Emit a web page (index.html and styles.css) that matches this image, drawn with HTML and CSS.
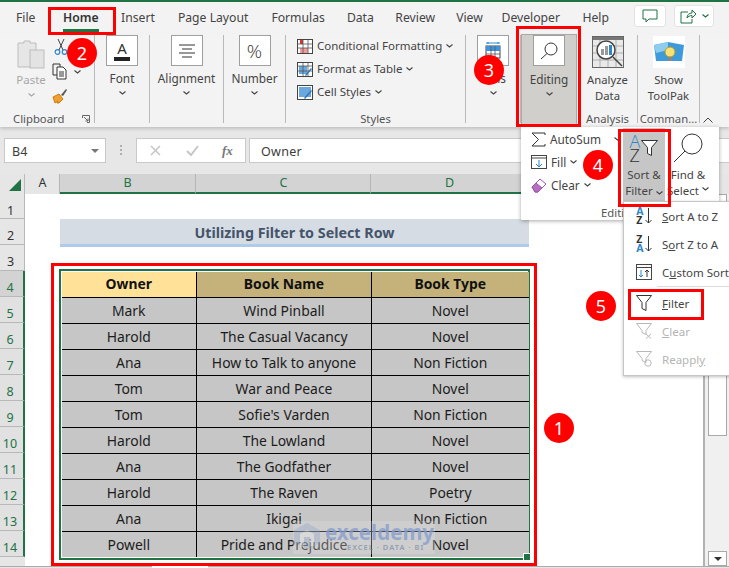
FILE: index.html
```html
<!DOCTYPE html>
<html lang="en">
<head>
<meta charset="utf-8">
<title>Utilizing Filter to Select Row</title>
<link rel="stylesheet" href="styles.css">
</head>
<body>
<div class="app">
  <nav class="tabs">
    <span class="tab t-file">File</span>
    <span class="tab t-home">Home</span>
    <span class="tab t-insert">Insert</span>
    <span class="tab t-page">Page Layout</span>
    <span class="tab t-form">Formulas</span>
    <span class="tab t-data">Data</span>
    <span class="tab t-rev">Review</span>
    <span class="tab t-view">View</span>
    <span class="tab t-dev">Developer</span>
    <span class="tab t-help">Help</span>
    <div class="tab-actions">
      <span class="act act-c"><svg width="16" height="14" viewBox="0 0 16 14"><path d="M1 1h14v9H7l-3 3v-3H1z" fill="none" stroke="#217346"/></svg></span>
      <span class="act act-s"><svg width="16" height="15" viewBox="0 0 16 15"><path d="M8 3H1v11h11v-4M7 9c0-3 2-5 5-5V1l4 4-4 4V6.500C10 6.500 8 7.500 7 9z" fill="none" stroke="#217346"/></svg><svg width="7" height="4" viewBox="0 0 7 4"><path d="M.5.500l3 2.500 3-2.500" fill="none" stroke="#217346" stroke-width="1.200"/></svg></span>
    </div>
  </nav>

  <section class="ribbon">
    <div class="group g-clip">
      <div class="clip-body">
        <div class="paste">
          <svg width="28" height="30" viewBox="0 0 28 30"><path d="M1 4h6V2h6v2h6v24H1z" fill="#e6e6e6" stroke="#bdbdbd"/><rect x="13" y="11" width="14" height="18" fill="#e3e3e3" stroke="#bdbdbd"/></svg>
          <span class="muted">Paste</span>
          <svg class="chev" width="7" height="4" viewBox="0 0 7 4"><path d="M.5.500l3 2.500 3-2.500" fill="none" stroke="#a6a6a6" stroke-width="1.100"/></svg>
        </div>
        <div class="clip-tools">
          <svg class="scissors" width="14" height="17" viewBox="0 0 14 17"><path d="M4 1l5 11M10 1L5 12" stroke="#444" fill="none"/><circle cx="3.500" cy="14" r="2.300" fill="none" stroke="#2e86c9" stroke-width="1.200"/><circle cx="10.500" cy="14" r="2.300" fill="none" stroke="#2e86c9" stroke-width="1.200"/></svg>
          <div class="copy-row"><svg width="17" height="17" viewBox="0 0 17 17"><path d="M5 12H1V1h7v3" fill="none" stroke="#333"/><path d="M5 4h6l3 3v9H5z" fill="#fff" stroke="#333"/><path d="M7 9h5M7 11h5M7 13h5" stroke="#333"/></svg><svg class="copy-chev" width="7" height="4" viewBox="0 0 7 4"><path d="M.5.500l3 2.500 3-2.500" fill="none" stroke="#444" stroke-width="1.100"/></svg></div>
          <svg width="16" height="16" viewBox="0 0 16 16"><path d="M1 9l6-3 4 5-4 4H5l1-2-3 2z" fill="#f0a030" stroke="#d07a10"/><path d="M9 7l5-6 1 1-4 6z" fill="#555"/></svg>
        </div>
      </div>
      <div class="group-label clip-label"><span>Clipboard</span><svg width="8" height="8" viewBox="0 0 8 8"><path d="M.5 3V.500H7.500V7.500H5M2 2l4 4M6 3.500V6H3.500" fill="none" stroke="#666"/></svg></div>
    </div>

    <div class="group g-font">
      <div class="big-box"><svg width="20" height="22" viewBox="0 0 20 22"><text x="10" y="14" class="svg-a">A</text><rect x="2" y="17" width="16" height="4" fill="#222"/></svg></div>
      <span>Font</span><svg class="chev" width="7" height="4" viewBox="0 0 7 4"><path d="M.5.500l3 2.500 3-2.500" fill="none" stroke="#444" stroke-width="1.100"/></svg>
    </div>
    <div class="group g-align">
      <div class="big-box"><svg width="16" height="14" viewBox="0 0 16 14"><path d="M0 1h16M3 5h10M0 9h16M3 13h10" stroke="#333"/></svg></div>
      <span>Alignment</span><svg class="chev" width="7" height="4" viewBox="0 0 7 4"><path d="M.5.500l3 2.500 3-2.500" fill="none" stroke="#444" stroke-width="1.100"/></svg>
    </div>
    <div class="group g-num">
      <div class="big-box pct">%</div>
      <span>Number</span><svg class="chev" width="7" height="4" viewBox="0 0 7 4"><path d="M.5.500l3 2.500 3-2.500" fill="none" stroke="#444" stroke-width="1.100"/></svg>
    </div>

    <div class="group g-styles">
      <div class="style-list">
        <div class="style-row"><svg width="16" height="15" viewBox="0 0 16 15"><rect x=".5" y=".5" width="15" height="14" fill="#fff" stroke="#444"/><rect x="3" y="1" width="3" height="4" fill="#e03030"/><rect x="3" y="9" width="8" height="5" fill="#f29a9a"/><path d="M6 1v13M11 1v13M1 5h14M1 9h14" stroke="#555" stroke-width=".800"/></svg><span>Conditional Formatting</span><svg width="7" height="4" viewBox="0 0 7 4"><path d="M.5.500l3 2.500 3-2.500" fill="none" stroke="#444" stroke-width="1.100"/></svg></div>
        <div class="style-row"><svg width="16" height="15" viewBox="0 0 16 15"><rect x=".5" y=".5" width="15" height="14" fill="#fff" stroke="#444"/><rect x="2" y="4" width="8" height="8" fill="#6aa9e0"/><path d="M1 4h14M6 1v13M11 1v13M1 9h14" stroke="#555" stroke-width=".800"/><path d="M8 13l6-7 1 1-6 7z" fill="#2e75b6"/></svg><span>Format as Table</span><svg width="7" height="4" viewBox="0 0 7 4"><path d="M.5.500l3 2.500 3-2.500" fill="none" stroke="#444" stroke-width="1.100"/></svg></div>
        <div class="style-row"><svg width="16" height="15" viewBox="0 0 16 15"><rect x=".5" y=".5" width="15" height="14" fill="#fff" stroke="#444"/><rect x="2" y="2" width="12" height="10" fill="#6aa9e0"/><path d="M7 13l7-8 1 1-7 8z" fill="#2e75b6"/></svg><span>Cell Styles</span><svg width="7" height="4" viewBox="0 0 7 4"><path d="M.5.500l3 2.500 3-2.500" fill="none" stroke="#444" stroke-width="1.100"/></svg></div>
      </div>
      <div class="group-label">Styles</div>
    </div>

    <div class="group g-cells">
      <div class="big-box"><svg width="16" height="17" viewBox="0 0 16 17"><path d="M1 1h14M3 0v2M13 0v2" stroke="#2e86c9"/><rect x="1" y="4" width="14" height="12" fill="#fff" stroke="#444"/><rect x="1" y="4" width="14" height="5" fill="#3f93dc"/><path d="M6 4v12M10 4v12M1 12h14" stroke="#555" stroke-width=".800"/></svg></div>
      <span>Cells</span><svg class="chev" width="7" height="4" viewBox="0 0 7 4"><path d="M.5.500l3 2.500 3-2.500" fill="none" stroke="#444" stroke-width="1.100"/></svg>
    </div>
    <div class="group g-edit">
      <div class="big-box"><svg width="18" height="18" viewBox="0 0 18 18"><circle cx="11" cy="7" r="6" fill="none" stroke="#333"/><path d="M7 11.500L1 17" stroke="#333"/></svg></div>
      <span>Editing</span><svg class="chev" width="7" height="4" viewBox="0 0 7 4"><path d="M.5.500l3 2.500 3-2.500" fill="none" stroke="#444" stroke-width="1.100"/></svg>
    </div>
    <div class="group g-ana">
      <svg class="bigicon" width="32" height="32" viewBox="0 0 32 32"><rect x=".5" y=".5" width="31" height="31" fill="#e9e9e9" stroke="#666"/><rect x="1" y="1" width="30" height="3" fill="#777"/><path d="M1 10h30M1 17h30M1 24h30M8 4v27M16 4v27M24 4v27" stroke="#999" stroke-width=".700"/><circle cx="14" cy="14" r="9" fill="#fff" stroke="#444" stroke-width="1.500"/><rect x="9" y="13" width="3" height="6" fill="#999"/><rect x="13" y="10" width="3" height="9" fill="#999"/><rect x="17" y="9" width="3" height="10" fill="#2e86c9"/><path d="M21 21l9 9" stroke="#444" stroke-width="1.500"/></svg>
      <span class="two-line">Analyze<br>Data</span>
      <div class="group-label">Analysis</div>
    </div>
    <div class="group g-cmd">
      <svg class="bigicon" width="32" height="32" viewBox="0 0 32 32"><rect width="32" height="32" fill="#fff"/><path d="M1 9l14-3 16 3-2 16H3z" fill="#3d9bdc"/><path d="M1 9l14-3v8L3 17z" fill="#8fcdf0"/><circle cx="17" cy="16" r="5" fill="#f7e27a" stroke="#b59a2a"/><rect x="15" y="21" width="4" height="4" fill="#888"/></svg>
      <span class="two-line">Show<br>ToolPak</span>
      <div class="group-label">Comman...</div>
    </div>
    <svg class="collapse" width="10" height="6" viewBox="0 0 10 6"><path d="M.5 5.500L5 1l4.500 4.500" fill="none" stroke="#444"/></svg>
  </section>

  <section class="formula">
    <div class="namebox"><span>B4</span><i class="caret"></i></div>
    <div class="dots"><b></b><b></b><b></b></div>
    <div class="fxbox">
      <svg width="11" height="11" viewBox="0 0 11 11"><path d="M1 1l9 9M10 1l-9 9" stroke="#c6c6c6" stroke-width="1.500"/></svg>
      <svg width="13" height="11" viewBox="0 0 13 11"><path d="M1 6l4 4 7-9" fill="none" stroke="#c6c6c6" stroke-width="2"/></svg>
      <span class="fx">fx</span>
    </div>
    <div class="finput">Owner</div>
  </section>

  <div class="colheads">
    <div class="corner"><i></i></div>
    <div class="ch ch-a">A</div>
    <div class="ch ch-b sel">B</div>
    <div class="ch ch-c sel">C</div>
    <div class="ch ch-d sel">D</div>
    <div class="ch ch-rest"></div>
  </div>

  <div class="sheet">
    <div class="rowheads">
      <div class="rh">1</div><div class="rh">2</div><div class="rh">3</div>
      <div class="rh sel first">4</div><div class="rh sel">5</div><div class="rh sel">6</div>
      <div class="rh sel">7</div><div class="rh sel">8</div><div class="rh sel">9</div>
      <div class="rh sel">10</div><div class="rh sel">11</div><div class="rh sel">12</div>
      <div class="rh sel">13</div><div class="rh sel">14</div>
    </div>
    <div class="grid">
      <h1 class="title">Utilizing Filter to Select Row</h1>
      <div class="selection">
        <table class="books">
          <colgroup><col class="c1"><col class="c2"><col class="c3"></colgroup>
          <thead><tr><th class="h1st">Owner</th><th>Book Name</th><th>Book Type</th></tr></thead>
          <tbody>
            <tr><td>Mark</td><td>Wind Pinball</td><td>Novel</td></tr>
            <tr><td>Harold</td><td>The Casual Vacancy</td><td>Novel</td></tr>
            <tr><td>Ana</td><td>How to Talk to anyone</td><td>Non Fiction</td></tr>
            <tr><td>Tom</td><td>War and Peace</td><td>Novel</td></tr>
            <tr><td>Tom</td><td>Sofie's Varden</td><td>Non Fiction</td></tr>
            <tr><td>Harold</td><td>The Lowland</td><td>Novel</td></tr>
            <tr><td>Ana</td><td>The Godfather</td><td>Novel</td></tr>
            <tr><td>Harold</td><td>The Raven</td><td>Poetry</td></tr>
            <tr><td>Ana</td><td>Ikigai</td><td>Non Fiction</td></tr>
            <tr><td>Powell</td><td>Pride and Prejudice</td><td>Novel</td></tr>
          </tbody>
        </table>
        <i class="handle"></i>
      </div>
    </div>
    <div class="vscroll">
      <div class="thumb"></div>
      <div class="downbtn"><i class="caret"></i></div>
    </div>
  </div>
  <div class="sheettabs"><i></i></div>

  <div class="watermark">
    <svg class="wm-logo" width="28" height="28" viewBox="0 0 28 28"><path d="M14 1l13 7v13l-13 6-13-6V8z" fill="#8aa2c8"/><path d="M14 8l7 4v12h-4v-9h-6v11l-4-2V12z" fill="#f0f0f0"/></svg>
    <div class="wm-text"><span class="wm-name">exceldemy</span><span class="wm-sub">EXCEL · DATA · BI</span></div>
  </div>

  <div class="editing-panel">
    <div class="ep-list">
      <div class="ep-row ep-auto"><svg width="15" height="15" viewBox="0 0 15 15"><path d="M14 3V1H1l6.500 6.500L1 14h13v-2" fill="none" stroke="#333"/></svg><span>AutoSum</span><svg class="ep-chev" width="7" height="4" viewBox="0 0 7 4"><path d="M.5.500l3 2.500 3-2.500" fill="none" stroke="#444" stroke-width="1.100"/></svg></div>
      <div class="ep-row"><svg width="16" height="14" viewBox="0 0 16 14"><rect x=".5" y=".5" width="15" height="13" fill="#fff" stroke="#444"/><path d="M1 3h14" stroke="#444"/><path d="M8 5v7M5 9l3 3 3-3" fill="none" stroke="#2e86c9"/></svg><span>Fill</span><svg width="7" height="4" viewBox="0 0 7 4"><path d="M.5.500l3 2.500 3-2.500" fill="none" stroke="#444" stroke-width="1.100"/></svg></div>
      <div class="ep-row"><svg width="16" height="15" viewBox="0 0 16 15"><path d="M1 9l8-8 6 5-8 8H4z" fill="#fff" stroke="#9a56a8"/><path d="M1 9l4-4 6 5-4 4H4z" fill="#b76cc4" stroke="#9a56a8"/></svg><span>Clear</span><svg width="7" height="4" viewBox="0 0 7 4"><path d="M.5.500l3 2.500 3-2.500" fill="none" stroke="#444" stroke-width="1.100"/></svg></div>
    </div>
    <div class="ep-sort">
      <div class="sf-icon"><span class="az"><b class="a">A</b><b class="z">Z</b></span><svg class="sf-funnel" width="17" height="17" viewBox="0 0 17 17"><path d="M.5.500h16l-6 7v8l-4-2v-6z" fill="#fff" stroke="#333"/></svg></div>
      <span>Sort &amp;</span>
      <span>Filter <svg width="7" height="4" viewBox="0 0 7 4"><path d="M.5.500l3 2.500 3-2.500" fill="none" stroke="#444" stroke-width="1.100"/></svg></span>
    </div>
    <div class="ep-find">
      <svg width="30" height="30" viewBox="0 0 30 30"><circle cx="19" cy="11" r="10" fill="#fff" stroke="#333"/><path d="M12 18L1 29" stroke="#333"/></svg>
      <span>Find &amp;</span>
      <span>Select <svg width="7" height="4" viewBox="0 0 7 4"><path d="M.5.500l3 2.500 3-2.500" fill="none" stroke="#444" stroke-width="1.100"/></svg></span>
    </div>
    <div class="ep-label">Editing</div>
  </div>

  <div class="submenu">
    <div class="sm-row"><span class="sm-ic"><span class="az small"><b class="a">A</b><b class="z">Z</b></span><svg width="7" height="16" viewBox="0 0 7 16"><path d="M3.500 0v15M.5 12l3 3 3-3" fill="none" stroke="#333"/></svg></span><span><u>S</u>ort A to Z</span></div>
    <div class="sm-row"><span class="sm-ic"><span class="az small"><b class="z">Z</b><b class="a">A</b></span><svg width="7" height="16" viewBox="0 0 7 16"><path d="M3.500 0v15M.5 12l3 3 3-3" fill="none" stroke="#333"/></svg></span><span>S<u>o</u>rt Z to A</span></div>
    <div class="sm-row sm-sep"><span class="sm-ic"><svg width="16" height="16" viewBox="0 0 16 16"><rect x=".5" y=".5" width="15" height="15" fill="#fff" stroke="#444"/><path d="M1 3.500h14" stroke="#444"/><path d="M5 6v7M3 11l2 2 2-2" fill="none" stroke="#2e86c9"/><path d="M11 13V6M9 8l2-2 2 2" fill="none" stroke="#333"/></svg></span><span>C<u>u</u>stom Sort...</span></div>
    <div class="sm-row"><span class="sm-ic"><svg width="16" height="16" viewBox="0 0 16 16"><path d="M.5.500h15l-5.500 7v8l-4-2v-6z" fill="#fff" stroke="#333"/></svg></span><span><u>F</u>ilter</span></div>
    <div class="sm-row off"><span class="sm-ic"><svg width="16" height="16" viewBox="0 0 16 16"><path d="M.5.500h15l-5.500 7v4l-4-2v-2z" fill="#fff" stroke="#b8b8b8"/><path d="M10 11l5 4.500M15 11l-5 4.500" stroke="#b8b8b8"/></svg></span><span><u>C</u>lear</span></div>
    <div class="sm-row off"><span class="sm-ic"><svg width="16" height="16" viewBox="0 0 16 16"><path d="M.5.500h15l-5.500 7v4l-4-2v-2z" fill="#fff" stroke="#b8b8b8"/><circle cx="12" cy="12" r="3.200" fill="none" stroke="#b8b8b8"/></svg></span><span>Reappl<u>y</u></span></div>
  </div>

  <i class="mark m-home"></i>
  <i class="mark m-edit"></i>
  <i class="mark m-sort"></i>
  <i class="mark m-filter"></i>
  <i class="mark m-table"></i>
  <b class="badge b1">1</b>
  <b class="badge b2">2</b>
  <b class="badge b3">3</b>
  <b class="badge b4">4</b>
  <b class="badge b5">5</b>
</div>
</body>
</html>
```
FILE: styles.css
```css
* { box-sizing: border-box; }
html, body { margin: 0; padding: 0; background: #fff; }
body { font-family: "Noto Sans", "Open Sans", sans-serif; font-size: 12px; color: #3c3c3c; }
.app { position: relative; width: 729px; height: 568px; overflow: hidden; display: flex; flex-direction: column; border-top: 2px solid #217346; background: #fff; }

/* tabs */
.tabs { flex: 0 0 32px; background: #f3f3f3; display: flex; align-items: flex-start; padding: 7px 0 0 16px; font-size: 12.200px; color: #444; position: relative; }
.tab { display: block; line-height: 17px; }
.t-file { margin-right: 27.500px; }
.t-home { font-weight: 600; color: #333; margin-right: 22.500px; position: relative; padding-bottom: 6px; }
.t-home::after { content: ""; position: absolute; left: 0; right: 0; bottom: 0; height: 3px; background: #217346; }
.t-insert { margin-right: 23px; }
.t-page { margin-right: 23px; }
.t-form { margin-right: 22px; }
.t-data { margin-right: 21.500px; }
.t-rev { margin-right: 21px; }
.t-view { margin-right: 18.700px; }
.t-dev { margin-right: 22.400px; }
.tab-actions { position: absolute; right: 15px; top: 3px; display: flex; gap: 8px; }
.act { height: 22px; background: #fff; border: 1px solid #e3e3e3; border-radius: 3px; display: flex; align-items: center; justify-content: center; gap: 6px; }
.act-c { width: 32px; }
.act-s { width: 40px; }

/* ribbon */
.ribbon { flex: 0 0 93px; background: #f3f3f3; display: flex; padding-top: 1px; position: relative; box-shadow: 0 2px 3px rgba(0,0,0,.16); z-index: 1; }
.group { position: relative; display: flex; flex-direction: column; align-items: center; height: 88px; border-right: 1px solid #b9b9b9; line-height: 16px; font-size: 11.800px; color: #444; }
.group > span { margin-top: 4px; }
.group > .chev { margin-top: 5px; }
.group-label { position: absolute; left: 0; right: 0; bottom: -3px; text-align: center; font-size: 11.300px; line-height: 14px; color: #555; }
.big-box { width: 32px; height: 31px; background: #fff; border: 1px solid #9f9f9f; display: flex; align-items: center; justify-content: center; }
.pct { font-size: 19px; font-family: "Open Sans", sans-serif; font-weight: 300; color: #333; }
.svg-a { font-family: "Noto Sans", sans-serif; font-size: 15px; text-anchor: middle; fill: #333; }
.muted { color: #a8a8a8; }

.g-clip { width: 95px; align-items: stretch; }
.clip-body { display: flex; padding: 3px 0 0 17px; }
.paste { width: 28px; display: flex; flex-direction: column; align-items: center; font-size: 11.500px; line-height: 16px; padding-top: 1px; }
.paste .muted { margin-top: 3px; }
.paste .chev { margin-top: 5px; }
.clip-tools { margin-left: 7px; display: flex; flex-direction: column; gap: 8px; align-items: flex-start; }
.scissors { margin-left: 2px; }
.copy-row { display: flex; align-items: center; height: 17px; }
.copy-chev { margin-left: 5px; }
.clip-label { display: flex; justify-content: space-between; align-items: center; padding: 0 4px 0 13px; }
.g-font { width: 55px; }
.g-align { width: 74px; }
.g-num { width: 62px; }
.g-styles { width: 180px; align-items: flex-start; padding: 0 0 0 11px; }
.style-list { display: flex; flex-direction: column; gap: 5px; margin-top: 2px; }
.style-row { display: flex; align-items: center; gap: 4px; height: 18px; font-size: 11.500px; }
.style-row span { min-width: 0; }
.g-cells { width: 55px; }
.g-edit { width: 56px; background: #d0cfcb; border: 1px solid #a9a9a5; margin: -1px 1px 0 0; height: 93px; padding-top: 0; }
.g-edit .big-box { height: 31px; margin-top: 0; }
.g-edit > span { margin-top: 5px; }
.g-ana { width: 60px; padding-top: 1px; }
.g-cmd { width: 62px; padding-top: 1px; }
.bigicon { flex: none; }
.group.g-ana > span, .group.g-cmd > span { line-height: 16px; margin-top: 4px; text-align: center; font-size: 11.300px; }
.collapse { position: absolute; right: 16px; top: 83px; }

/* formula */
.formula { flex: 0 0 47px; background: #e7e7e7; display: flex; align-items: flex-start; padding: 11px 0 0 4px; }
.namebox { width: 102px; height: 25px; background: #fff; border: 1px solid #c9c9c9; display: flex; align-items: center; justify-content: space-between; padding: 1px 6px 0 7px; font-size: 12.500px; }
.caret { display: block; width: 0; height: 0; border-left: 4px solid transparent; border-right: 4px solid transparent; border-top: 4px solid #777; }
.dots { width: 30px; display: flex; flex-direction: column; gap: 2px; align-items: center; padding-top: 7px; }
.dots b { width: 2px; height: 2px; background: #b0b0b0; }
.fxbox { width: 110px; height: 25px; background: #fff; border: 1px solid #c9c9c9; display: flex; align-items: center; padding-left: 13px; gap: 25px; }
.fx { font-family: "Liberation Serif", serif; font-style: italic; font-weight: 700; font-size: 13px; color: #777; margin-left: -2px; }
.finput { flex: 1; height: 25px; margin-left: 3px; background: #fff; border: 1px solid #c9c9c9; border-right: 0; padding-left: 11px; line-height: 25px; font-size: 12.500px; letter-spacing: .3px; }

/* column heads */
.colheads { flex: 0 0 20px; display: flex; background: #e6e6e6; font-size: 12.500px; color: #333; }
.corner { width: 25px; position: relative; border-right: 1px solid #bbb; }
.corner i { position: absolute; right: 3px; bottom: 3px; width: 0; height: 0; border-left: 12px solid transparent; border-bottom: 12px solid #217346; }
.ch { text-align: center; line-height: 18px; border-right: 1px solid #b5b5b5; }
.ch-a { width: 35px; padding-left: 1px; }
.ch-b { width: 136px; }
.ch-c { width: 175px; padding-left: 1px; }
.ch-d { width: 158px; }
.ch-rest { flex: 1; border-right: 0; }
.ch.sel { background: #d3d3d3; color: #217346; border-bottom: 2px solid #217346; }

/* sheet */
.sheet { flex: 0 0 372px; display: flex; }
.rowheads { width: 25px; background: #e6e6e6; display: flex; flex-direction: column; }
.rh { height: 26px; flex: none; text-align: center; line-height: 34px; font-size: 12.500px; color: #333; padding-right: 3px; border-bottom: 1px solid #b8b8b8; border-right: 1px solid #b8b8b8; overflow: hidden; }
.rh:first-child { height: 25px; }
.rh.sel { color: #217346; background: #e1e1e1; border-right: 2px solid #217346; }
.rh.first { background: #d3d3d3; }
.grid { width: 680px; background: #fff; padding: 25px 0 0 35px; position: relative; border-right: 2px solid #b2b2b2; }
.title { margin: 0; width: 469px; height: 28px; background: #d6dce4; border-bottom: 3px solid #b0cbea; font-size: 14.300px; line-height: 27px; font-weight: 700; color: #44546a; text-align: center; }
.selection { position: relative; width: 471px; margin: 22px 0 0 -1px; border: 2px solid #217346; padding-right: 1px; }
.books { border-collapse: collapse; table-layout: fixed; width: 467px; margin: 1px 0 1px .5px; font-size: 13.900px; color: #1c1c1c; background: #c6c6c6; }
.c1 { width: 135px; }
.c2 { width: 175px; }
.c3 { width: 157px; }
.books th, .books td { height: 26px; padding: 2px 0 0; text-align: center; font-weight: 400; border-bottom: 1px solid #000; border-left: 1px solid #000; line-height: 22px; }
.books tr > :first-child { border-left: 0; }
.books tr:last-child td { border-bottom: 0; }
.books th { height: 25px; padding-top: 0; background: #c4b27a; font-weight: 700; color: #111; }
.books th.h1st { background: #ffe297; }
.handle { position: absolute; right: -3px; bottom: -3px; width: 6px; height: 6px; background: #217346; border: 1px solid #fff; box-sizing: content-box; }
.vscroll { flex: 1; background: #f0f0f0; position: relative; padding: 0 2px 0 3px; display: flex; flex-direction: column; justify-content: space-between; }
.thumb { height: 242px; background: #fff; border: 1px solid #a9a9a9; }
.downbtn { height: 15px; background: #fff; border: 1px solid #a9a9a9; display: flex; align-items: center; justify-content: center; }
.downbtn .caret { border-top-color: #333; }
.sheettabs { flex: 1; background: #e6e6e6; border-top: 1px solid #aaa; position: relative; }
.sheettabs i { position: absolute; left: 152px; top: -1px; width: 56px; height: 3px; background: #fff; }

/* watermark */
.watermark { position: absolute; left: 293px; top: 519px; width: 142px; height: 33px; background: rgba(226,226,226,.3); display: flex; align-items: flex-start; gap: 4px; padding-top: 1px; }
.wm-logo { opacity: .32; }
.wm-text { display: flex; flex-direction: column; }
.wm-name { font-size: 20.500px; line-height: 20px; font-weight: 700; color: rgba(130,155,205,.75); }
.wm-sub { font-size: 7.500px; line-height: 9px; margin: 1px 0 0 22px; color: rgba(120,135,165,.7); letter-spacing: 1px; font-weight: 600; }

/* editing panel */
.editing-panel { position: absolute; left: 521px; top: 125px; width: 198px; height: 93px; background: #fff; box-shadow: 0 1px 4px rgba(0,0,0,.35); font-size: 11.800px; color: #444; z-index: 2; }
.ep-list { position: absolute; left: 10px; top: 3px; display: flex; flex-direction: column; gap: 5px; }
.ep-row { display: flex; align-items: center; gap: 4px; height: 18px; }
.ep-chev { margin-left: 9px; }
.ep-sort, .ep-find { position: absolute; top: 1px; width: 42px; height: 74px; display: flex; flex-direction: column; align-items: center; line-height: 16px; white-space: nowrap; font-size: 11.500px; }
.ep-sort { left: 102px; background: #c6c6c6; padding-top: 6px; }
.ep-find { left: 146px; padding-top: 5px; }
.ep-find svg:first-child { margin-bottom: 4px; }
.sf-icon { display: flex; align-items: flex-start; gap: 1px; height: 32px; margin-bottom: 1px; }
.sf-funnel { margin-top: 6px; }
.az { display: flex; flex-direction: column; line-height: 14px; font-size: 18px; font-family: "Open Sans", sans-serif; font-weight: 300; }
.az b { font-weight: 300; display: block; }
.az .a { color: #2e86c9; }
.az .z { color: #333; }
.az.small { font-size: 10.500px; line-height: 9px; font-family: "Noto Sans", sans-serif; }
.az.small b { font-weight: 700; }
.ep-label { position: absolute; left: 80px; bottom: 0; font-size: 11.300px; line-height: 14px; color: #555; }

/* submenu */
.submenu { position: absolute; left: 623px; top: 199px; width: 130px; height: 175px; background: #fff; border: 1px solid #c6c6c6; box-shadow: 0 1px 3px rgba(0,0,0,.25); z-index: 3; font-size: 11.500px; color: #444; }
.sm-row { height: 28px; display: flex; align-items: center; gap: 10px; padding-left: 12px; white-space: nowrap; }
.sm-sep { position: relative; margin-bottom: 3px; }
.sm-sep::after { content: ""; position: absolute; left: 33px; right: 0; bottom: -1px; height: 1px; background: #dcdcdc; }
.sm-ic { width: 16px; height: 18px; display: flex; align-items: center; justify-content: center; gap: 1px; flex: none; }
.off { color: #b4b4b4; }

/* annotations */
.mark { position: absolute; display: block; border: 3px solid #f00; z-index: 4; pointer-events: none; }
.m-home { left: 48px; top: 5px; width: 68px; height: 28px; }
.m-edit { left: 516px; top: 24px; width: 65px; height: 101px; }
.m-sort { left: 618px; top: 127px; width: 53px; height: 78px; }
.m-filter { left: 628px; top: 287px; width: 76px; height: 31px; }
.m-table { left: 51px; top: 261px; width: 486px; height: 303px; }
.badge { position: absolute; width: 30px; height: 30px; border-radius: 50%; background: #f00; color: #fff; font-weight: 400; font-size: 18px; line-height: 30px; text-align: center; z-index: 5; }
.b1 { left: 544px; top: 411px; }
.b2 { left: 67px; top: 36px; }
.b3 { left: 474px; top: 53px; }
.b4 { left: 583px; top: 148px; }
.b5 { left: 586px; top: 289px; }
```
